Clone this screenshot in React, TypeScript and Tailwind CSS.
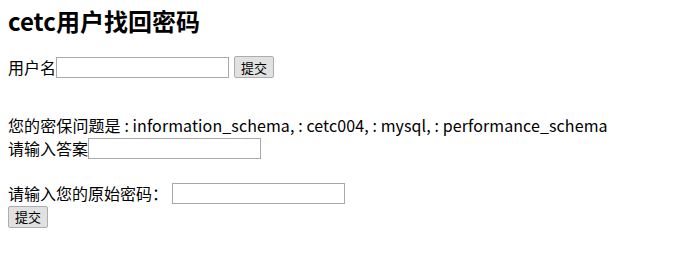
import React from 'react';

const font = "font-['Microsoft_YaHei','Noto_Sans_CJK_SC',sans-serif]";

const TextBox: React.FC<{ className?: string }> = ({ className = '' }) => (
  <input
    type="text"
    className={`h-[21px] w-[173px] border border-[#a9a9a9] bg-white px-[2px] align-middle text-[13px] outline-none ${className}`}
  />
);

const SubmitButton: React.FC<{ className?: string }> = ({ className = '' }) => (
  <button
    type="button"
    className={`h-[22px] rounded-[2px] border border-[#adadad] bg-[#e1e1e1] px-[6px] align-middle text-[13px] leading-none text-black ${className}`}
  >
    提交
  </button>
);

const App: React.FC = () => {
  return (
    <div className={`min-h-[253px] w-full bg-white px-2 text-[16px] leading-[21px] text-black ${font}`}>
      <h2 className="pt-[5px] text-[24px] font-bold leading-[32px]">cetc用户找回密码</h2>

      <form className="mt-[19px] flex items-center">
        <span>用户名</span>
        <TextBox />
        <SubmitButton className="ml-[5px]" />
      </form>

      <form className="mt-[37px]">
        <p className="tracking-[0.1px]">您的密保问题是 : information_schema, : cetc004, : mysql, : performance_schema</p>
        <div className="mt-[2px] flex items-center">
          <span>请输入答案</span>
          <TextBox />
        </div>
        <div className="mt-[24px] flex items-center">
          <span>请输入您的原始密码：</span>
          <TextBox className="ml-[4px]" />
        </div>
        <SubmitButton />
      </form>
    </div>
  );
};

export default App;
